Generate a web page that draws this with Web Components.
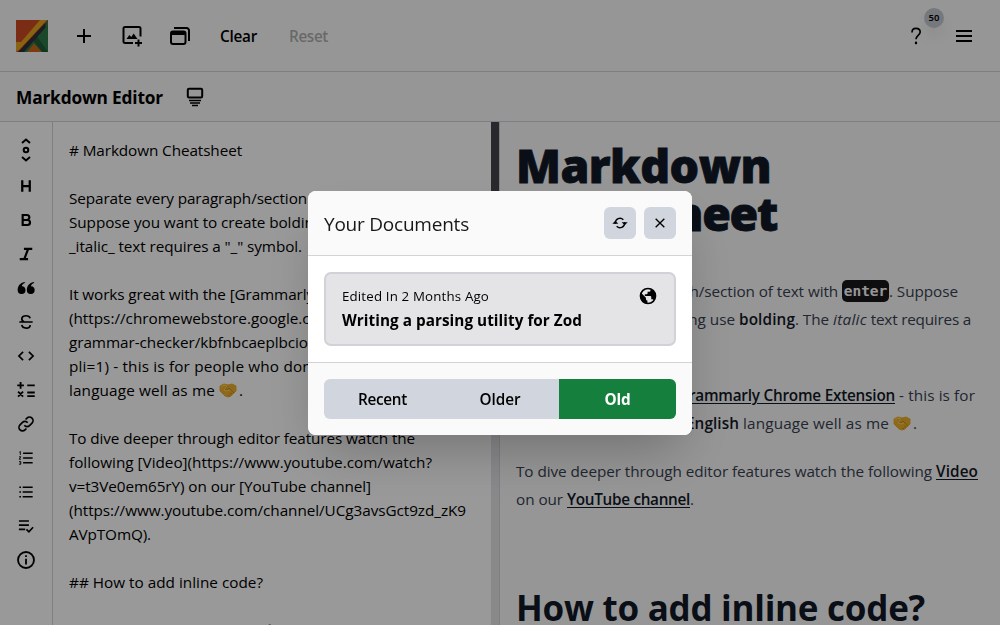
<!DOCTYPE html>
<html lang="en">
<head>
<meta charset="utf-8">
<title>Markdown Editor</title>
<style>
html,body{margin:0;height:100%;overflow:hidden;background:#fafafa;font-family:"Open Sans","Noto Sans",sans-serif;font-size:15.3px;color:#000}
</style>
</head>
<body>
<editor-app></editor-app>
<script>
const define=(name,html,setup)=>{
  const t=document.createElement('template');t.innerHTML=html;
  customElements.define(name,class extends HTMLElement{
    constructor(){super();this.attachShadow({mode:'open'}).append(t.content.cloneNode(true));}
    connectedCallback(){if(setup)setup.call(this);}
  });
};

/* A single line of text tracked to a given measure (w, in px). */
define('text-run','<style>:host{display:block;white-space:pre;flex-shrink:0}span{display:inline-block;white-space:pre;text-decoration:var(--line,none);text-decoration-thickness:1px;text-underline-offset:2px}</style><span><slot></slot></span>',function(){
  const s=this.shadowRoot.querySelector('span'),w=+this.getAttribute('w');
  const n=[...this.textContent].length;
  if(w&&n>1){const cur=s.getBoundingClientRect().width;if(cur)s.style.letterSpacing=((w-cur)/n)+'px';}
});

const icons={
plus:'<path d="M12 5v14M5 12h14"/>',
image:'<path d="M20.500 12.500V4.500a1.500 1.500 0 0 0-1.500-1.500H5A1.500 1.500 0 0 0 3.500 4.500v13.500A1.500 1.500 0 0 0 5 19h8M18.500 15.500v7M15 19h7"/><path d="M6.500 15l2.800-4 2 2 2.400-3.500 3.800 5.500z" fill="currentColor" stroke="none"/>',
stack:'<rect x="3" y="7.500" width="14.500" height="12.500" rx="2"/><path d="M3 9.500h14.500" stroke-width="3"/><path d="M6 4h12.500A2.500 2.500 0 0 1 21 6.500V17"/>',
layout:'<rect x="4.800" y="3.800" width="14.400" height="8.700" rx="1.200"/><path d="M6 15.500h12M7 18h10M9 20.500h6" stroke-width="1.500"/>',
help:'<path d="M7.200 7.800C7.200 4.500 9.300 2.900 12 2.900c2.900 0 5 1.700 5 4.400 0 4-5 4.200-5 8.700"/><path d="M12 18.800v3" stroke-width="2.600"/>',
menu:'<path d="M4 7h16M4 12h16M4 17h16"/>',
jump:'<path d="M8 5l4-3.500 4 3.500M8 19l4 3.500 4-3.500"/><circle cx="12" cy="12" r="2.300"/>',
h:'<path d="M7.500 5v14M16.500 5v14M7.500 12h9" stroke-width="2.700"/>',
b:'<path d="M8 6h5a3 3 0 0 1 0 6H8zM8 12h5.800a3 3 0 0 1 0 6H8z" stroke-width="2.600"/>',
i:'<path d="M9.500 5.800h10M4.500 18.200h10M14.500 6l-4.500 12" stroke-width="2.600"/>',
quote:'<path d="M10 4.800C5 6 2 9.500 2 14.500a4.700 4.700 0 1 0 5-4.700C7.300 8 8.500 6.700 11 5.800zM21 4.800C16 6 13 9.500 13 14.500a4.700 4.700 0 1 0 5-4.700C18.300 8 19.500 6.700 22 5.800z" fill="currentColor" stroke="none"/>',
strike:'<path d="M4 12h16M17 7.500C16 3.500 8 3.500 7 7.500c-.3 2.500 1 3.800 3 4.500M7 15.500c.7 5 10 5 10 0"/>',
code:'<path d="M8.500 7l-5 5 5 5M15.500 7l5 5-5 5"/>',
math:'<path d="M5.500 2.500v8M1.500 6.500h8M13.500 6.500h9M2.500 14l6 6M8.500 14l-6 6M13.500 15h9M13.500 19.300h9" stroke-width="2.200"/>',
link:'<path d="M10 13.500a4.200 4.200 0 0 0 6.200.4l3-3a4.200 4.200 0 0 0-6-6l-1.700 1.700M14 10.500a4.200 4.200 0 0 0-6.200-.4l-3 3a4.200 4.200 0 0 0 6 6l1.700-1.700"/>',
ol:'<path d="M8.500 6.300H20M8.500 12H20M8.500 17.700H20"/><path d="M4 5l1.200-.8v4M3.700 10.500h2L3.900 13.500h2M3.700 16.300h2v3.200h-2M4.400 18h1" stroke-width="1.100"/>',
ul:'<path d="M8 6.300H20M8 12H20M8 17.700H20M4 6.300h2M4 12h2M4 17.700h2"/>',
check:'<path d="M3.500 6H15.500M3.500 11H15.500M3.500 16H11M12.500 16l3 3 5-5.500"/>',
info:'<circle cx="12" cy="12" r="8.700"/><path d="M12 10.500V17M12 6.800v2"/>',
sync:'<path d="M5 13V12a7 7 0 0 1 12-5M19 11v1a7 7 0 0 1-12 5"/><path d="M.5 13h9L5 8.500zM14.500 11h9L19 15.500z" fill="currentColor" stroke="none"/>',
close:'<path d="M5.500 5.500l13 13M18.500 5.500l-13 13"/>',
globe:'<circle cx="12" cy="12" r="9"/><path d="M4 8.500l5.500 5.500v1.500c0 1 .8 1.800 1.800 1.800V21C6 21 2.800 17 2.800 12zM10 3l5 .2v2c0 1.200-.8 1.800-2 1.800h-1.500v1.800c0 .7-.5 1-1 1H8.200V12h6.500c.8 0 1.200.5 1.200 1.200v2.800h1c.9 0 1.700.6 2 1.400C24 10 19 3 10 3z" fill="currentColor" stroke="none"/>'
};
define('ui-icon','<style>:host{display:block;width:var(--size,24px);height:var(--size,24px)}svg{display:block;width:100%;height:100%;overflow:visible}</style><svg viewBox="0 0 24 24" fill="none" stroke="currentColor" stroke-width="2"></svg>',function(){
  this.shadowRoot.querySelector('svg').innerHTML=icons[this.getAttribute('name')];
});

define('app-logo',`<style>:host{display:block;width:32px;height:32px}svg{display:block}</style>
<svg width="32" height="32" viewBox="0 0 32 32"><rect width="32" height="32" fill="#cc4b22"/><path d="M32 0v32H7z" fill="#2b7a46"/><path d="M20 15l12 17h-6L17 20z" fill="#1f5a38"/><path d="M24 0h7L4 29l-4 3V22h5z" fill="#e4a51f"/><path d="M29.500 2.500v5L8 32H2z" fill="#302f38"/><path d="M18 23.500l8 8.500H11z" fill="#cc661c"/></svg>`);

define('count-badge','<style>:host{position:absolute;left:20px;top:-16px;width:20px;height:20px;border-radius:50%;background:#c3cad2;font:600 9.500px/20px "Noto Sans",sans-serif;text-align:center;box-shadow:0 10px 15px -3px #0000001a}</style><slot></slot>');

define('top-bar',`<style>:host{display:flex;align-items:center;height:71px;padding:0 24px 0 16px;border-bottom:1px solid #d4d4d8;box-sizing:content-box}
nav{display:flex;align-items:center;flex:1;margin-left:24px;gap:24px;font-weight:600}
.help{position:relative;margin-left:auto}.off{opacity:.3}text-run{margin-top:1px}.c{margin-left:4px}.r{margin-left:8px}.help ui-icon{--size:20px;margin:2px}</style>
<app-logo></app-logo><nav><ui-icon name="plus"></ui-icon><ui-icon name="image"></ui-icon><ui-icon name="stack"></ui-icon><text-run class="c" w="37">Clear</text-run><text-run class="off r" w="39">Reset</text-run>
<div class="help"><ui-icon name="help"></ui-icon><count-badge>50</count-badge></div><ui-icon name="menu"></ui-icon></nav>`);

define('title-bar',`<style>:host{display:flex;align-items:center;gap:20px;height:49px;padding:0 16px;border-bottom:1px solid #d4d4d8}text-run{font-size:17.3px;font-weight:700;margin-top:2px}</style><text-run w="147">Markdown Editor</text-run><ui-icon name="layout"></ui-icon>`);

define('tool-rail',`<style>:host{display:flex;flex-direction:column;align-items:center;gap:14px;width:52px;padding-top:16px;border-right:1px solid #d4d4d8;background:#fff;flex:none}ui-icon{--size:20px;height:20px;flex:none}ui-icon[name=jump]{--size:24px;height:24px}
ui-icon[name=info]{--size:22px;height:22px;margin-top:-1px}</style>
${['jump','h','b','i','quote','strike','code','math','link','ol','ul','check','info'].map(n=>`<ui-icon name="${n}"></ui-icon>`).join('')}`);

define('hand-shake',`<style>:host{display:block;width:20px;height:16px}svg{display:block}</style><svg width="18" height="15" viewBox="0 0 18 15"><path d="M1 3l4-2 4 1 4-1 4 2v5l-5 5-3 1-3-1-5-5z" fill="#eab02d" stroke="#eab02d" stroke-linejoin="round"/><path d="M9 3L6 6l2 1 2-2 5 5M9 12l2 1M11 10l2 1" fill="none" stroke="#c98d22"/><path d="M2 4l3-2 3 1-3 4 3 1 3-1" fill="none" stroke="#ffd05a"/></svg>`);

const left=[['# Markdown Cheatsheet',173],[''],['Separate every paragraph/section',238],['Suppose you want to create bolding',253],['_italic_ text requires a "_" symbol.',233],[''],['It works great with the [Grammarly',245],['(https://chromewebstore.google.com',264],['grammar-checker/kbfnbcaeplbcio',239],['pli=1) - this is for people who don\'t',252],['language well as me ',150,1],[''],['To dive deeper through editor features watch the',346],['following [Video](https://www.youtube.com/watch?',363],['v=t3Ve0em65rY) on our [YouTube channel]',302],['(https://www.youtube.com/channel/UCg3avsGct9zd_zK9',397],['AVpTOmQ).',82],[''],['## How to add inline code?',194],[''],['To add inline code use the ` symbol.',266]];
define('source-pane',`<style>:host{display:block;box-sizing:border-box;flex:none;width:438px;padding:16px;background:#fff;line-height:24px;overflow:hidden}div{display:flex;height:24px}hand-shake{margin-top:5px}</style>
${left.map(([t,w,e])=>`<div>${t?`<text-run w="${w}">${t}</text-run>`:''}${e?'<hand-shake></hand-shake>.':''}</div>`).join('')}`);

define('scroll-track','<style>:host{display:block;flex:none;width:8px;background:#e4e4e7;border-right:1px solid #d4d4d8}div{height:180px;background:#44434b}</style><div></div>');

const run=(w,t)=>`<text-run w="${w}">${t}</text-run>`;
const paragraphs=[[run(326,'Separate every paragraph/section of text with ')+'<code>enter</code>'+run(69,'. Suppose'),run(223,'you want to create bolding use ')+'<b>'+run(56,'bolding')+'</b>'+run(38,'. The ')+'<i>'+run(34,'italic')+'</i>'+run(104,' text requires a'),run(82,'"_" symbol.')],
  [run(162,'It works great with the ')+'<u>'+run(217,'Grammarly Chrome Extension')+'</u>'+run(80,' - this is for'),run(170,"people who don't know ")+'<b>'+run(53,'English')+'</b>'+run(154,' language well as me ')+'<hand-shake></hand-shake>.'],
  [run(420,'To dive deeper through editor features watch the following ')+'<u>'+run(42,'Video')+'</u>',run(51,'on our ')+'<u>'+run(123,'YouTube channel')+'</u>.']];
define('preview-pane',`<style>:host{display:block;flex:1;padding:19px 16px 0;background:#fafafa;color:#374151;min-width:0;overflow:hidden;line-height:28px;white-space:nowrap}
h1,h2,p{margin:0}h1{font-size:46.500px;line-height:48px;font-weight:800;color:#111827;height:96px;-webkit-text-stroke:.8px #111827}h1 text-run{height:48px}
p{margin-top:20px}h1+p{margin-top:40px}.line{display:flex;height:28px}b,u{font-weight:600;color:#111827}u{text-decoration:none;--line:underline}
code{display:block;font:700 14.500px/22px "DejaVu Sans Mono",monospace;background:#18181b;color:#fafafa;border-radius:5px;height:22px;width:47px;margin-top:3px;text-align:center}
h2{font-size:35px;line-height:44px;margin-top:73px;font-weight:700;color:#111827}hand-shake{margin-top:7px}</style>
<h1>${run(255,'Markdown')}${run(261,'Cheatsheet')}</h1>
${paragraphs.map(ls=>'<p>'+ls.map(l=>`<span class="line">${l}</span>`).join('')+'</p>').join('')}<h2>${run(409,'How to add inline code?')}</h2>`);

define('icon-button','<style>:host{display:grid;place-items:center;width:32px;height:32px;border-radius:6px;background:#d1d5de}</style><slot></slot>');
define('document-card',`<style>:host{display:block;box-sizing:border-box;height:74px;border:2px solid #d1d1d8;border-radius:7px;background:#e4e4e7;padding:12px 16px}
div{display:flex;justify-content:space-between;align-items:center;height:20px;font-size:13.300px}ui-icon{--size:20px}.t{font-weight:700;line-height:24px;margin-top:2px}</style><div><text-run w="147">Edited In 2 Months Ago</text-run><ui-icon name="globe"></ui-icon></div><text-run class="t" w="240">Writing a parsing utility for Zod</text-run>`);
define('segment-control',`<style>:host{display:grid;grid-template-columns:117px 118px 117px;height:40px;border-radius:6px;overflow:hidden;background:#d1d5de;font-weight:600;line-height:40px;text-align:center}.on{background:#15803d;color:#fff;font-weight:700}</style><text-run w="49">Recent</text-run><text-run w="41">Older</text-run><text-run class="on" w="26">Old</text-run>`);
define('documents-dialog',`<style>:host{display:block;width:384px;border-radius:8px;overflow:hidden;background:#fff;box-shadow:0 25px 50px -12px #00000040}
header{display:flex;align-items:center;gap:8px;height:64px;padding:0 16px;border-bottom:1px solid #d4d4d8;background:#fafafa}header text-run{font-size:19px;flex:1;margin-top:2px;color:#18181b}
main{padding:16px}footer{padding:16px;border-top:1px solid #d4d4d8;background:#fafafa}</style>
<header><text-run w="145">Your Documents</text-run><icon-button><ui-icon name="sync" style="--size:16px"></ui-icon></icon-button><icon-button><ui-icon name="close" style="--size:16px"></ui-icon></icon-button></header>
<main><document-card></document-card></main><footer><segment-control></segment-control></footer>`);

define('modal-layer','<style>:host{position:fixed;inset:0;display:grid;place-items:center;background:#0006;z-index:2}</style><documents-dialog></documents-dialog>');
define('editor-app',`<style>:host{display:flex;flex-direction:column;height:625px;overflow:hidden}section{display:flex;flex:1;min-height:0}</style>
<top-bar></top-bar><title-bar></title-bar><section><tool-rail></tool-rail><source-pane></source-pane><scroll-track></scroll-track><preview-pane></preview-pane></section><modal-layer></modal-layer>`);
</script>
</body>
</html>
